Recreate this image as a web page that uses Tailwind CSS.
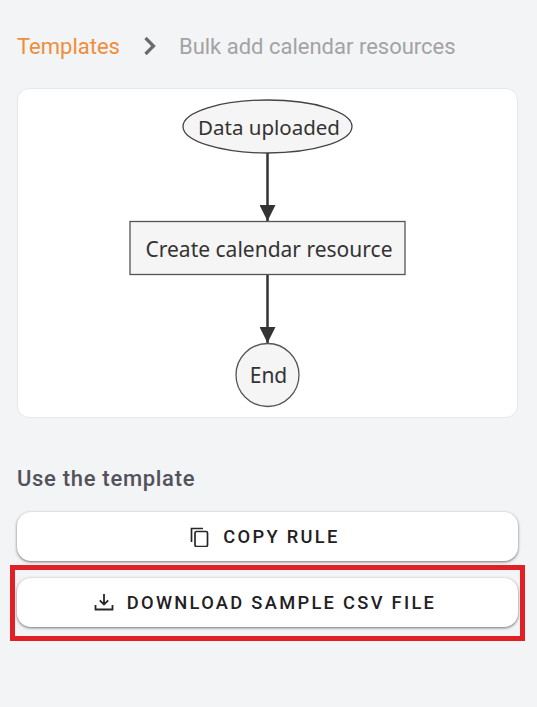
<!DOCTYPE html>
<html lang="en">
<head>
<meta charset="utf-8">
<title>Bulk add calendar resources</title>
<script src="https://cdn.jsdelivr.net/npm/@tailwindcss/browser@4"></script>
</head>
<body class="bg-[#f3f4f6] font-['Roboto',sans-serif] h-[707px] overflow-hidden">
  <div class="pl-[17px] pr-[19px] pt-[32px]">
    <!-- Breadcrumb -->
    <nav class="flex items-center h-[28px] text-[22px]">
      <span class="text-[#ef8e3a] whitespace-nowrap">Templates</span>
      <svg class="ml-[22px] w-[15px] h-[20px]" viewBox="0 0 15 20" fill="none">
        <path d="M3.500 2l8 8-8 8" stroke="#6b6b6b" stroke-width="3.200"/>
      </svg>
      <span class="ml-[22px] text-[#a3a3a3] whitespace-nowrap">Bulk add calendar resources</span>
    </nav>

    <!-- Flowchart -->
    <div class="mt-[28px] h-[330px] bg-white border border-[#e5e7eb] rounded-[12px] overflow-hidden">
      <svg class="w-[499px] h-[328px] font-['Noto_Sans',sans-serif]" viewBox="18 89 499 328">
        <defs>
          <marker id="arrow" markerWidth="16" markerHeight="16" refX="16" refY="8" orient="auto" markerUnits="userSpaceOnUse">
            <path d="M0 0L16 8L0 16z" fill="#333"/>
          </marker>
        </defs>
        <path d="M267.500 153V221" stroke="#333" stroke-width="2.500" marker-end="url(#arrow)"/>
        <path d="M267.500 275V343" stroke="#333" stroke-width="2.500" marker-end="url(#arrow)"/>
        <ellipse cx="267.500" cy="126.500" rx="84.500" ry="26.500" fill="#f5f5f5" stroke="#444" stroke-width="1.300"/>
        <rect x="130" y="221.500" width="275" height="53" fill="#f5f5f5" stroke="#555" stroke-width="1.300"/>
        <circle cx="267.500" cy="375" r="31.500" fill="#f5f5f5" stroke="#555" stroke-width="1.300"/>
        <g fill="#333" font-size="21" text-anchor="middle">
          <text x="269" y="135" font-size="20.500">Data uploaded</text>
          <text x="269" y="257">Create calendar resource</text>
          <text x="268.500" y="383">End</text>
        </g>
      </svg>
    </div>

    <h3 class="mt-[47px] h-[28px] leading-[28px] text-[22px] font-medium tracking-[0.7px] text-[#52525b]">Use the template</h3>

    <!-- Actions -->
    <div class="mt-[19px] flex flex-col gap-[17px]">
      <button class="h-[49px] w-full pr-[5px] flex items-center justify-center gap-[13px] bg-white rounded-[14px] shadow-[0_1px_3px_rgba(0,0,0,0.55)] text-[#1f2023] text-[18.300px] font-medium tracking-[2.300px]">
        <svg class="w-[20px] h-[20px]" viewBox="0 0 20 20" fill="none" stroke="#27272a" stroke-width="1.700">
          <path d="M1.500 15V1.500H13"/>
          <rect x="5" y="4.500" width="12.500" height="15" rx="1.500"/>
        </svg>
        COPY RULE
      </button>
      <div class="relative">
        <button class="h-[49px] w-full pr-[5px] flex items-center justify-center gap-[13px] bg-white rounded-[14px] shadow-[0_1px_3px_rgba(0,0,0,0.55)] text-[#1f2023] text-[18.300px] font-medium tracking-[2.300px]">
          <svg class="w-[20px] h-[20px]" viewBox="0 0 20 20" fill="none" stroke="#27272a" stroke-width="1.800">
            <path d="M10 1v10.500M5.800 7.300L10 11.500 14.200 7.300"/>
            <path d="M1.500 12v4.500h17V12"/>
          </svg>
          DOWNLOAD SAMPLE CSV FILE
        </button>
        <!-- highlight box drawn over the button -->
        <div class="absolute left-[-7.500px] right-[-6.500px] top-[-13px] bottom-[-14px] border-[5px] border-[#e02024] pointer-events-none"></div>
      </div>
    </div>
  </div>
</body>
</html>
